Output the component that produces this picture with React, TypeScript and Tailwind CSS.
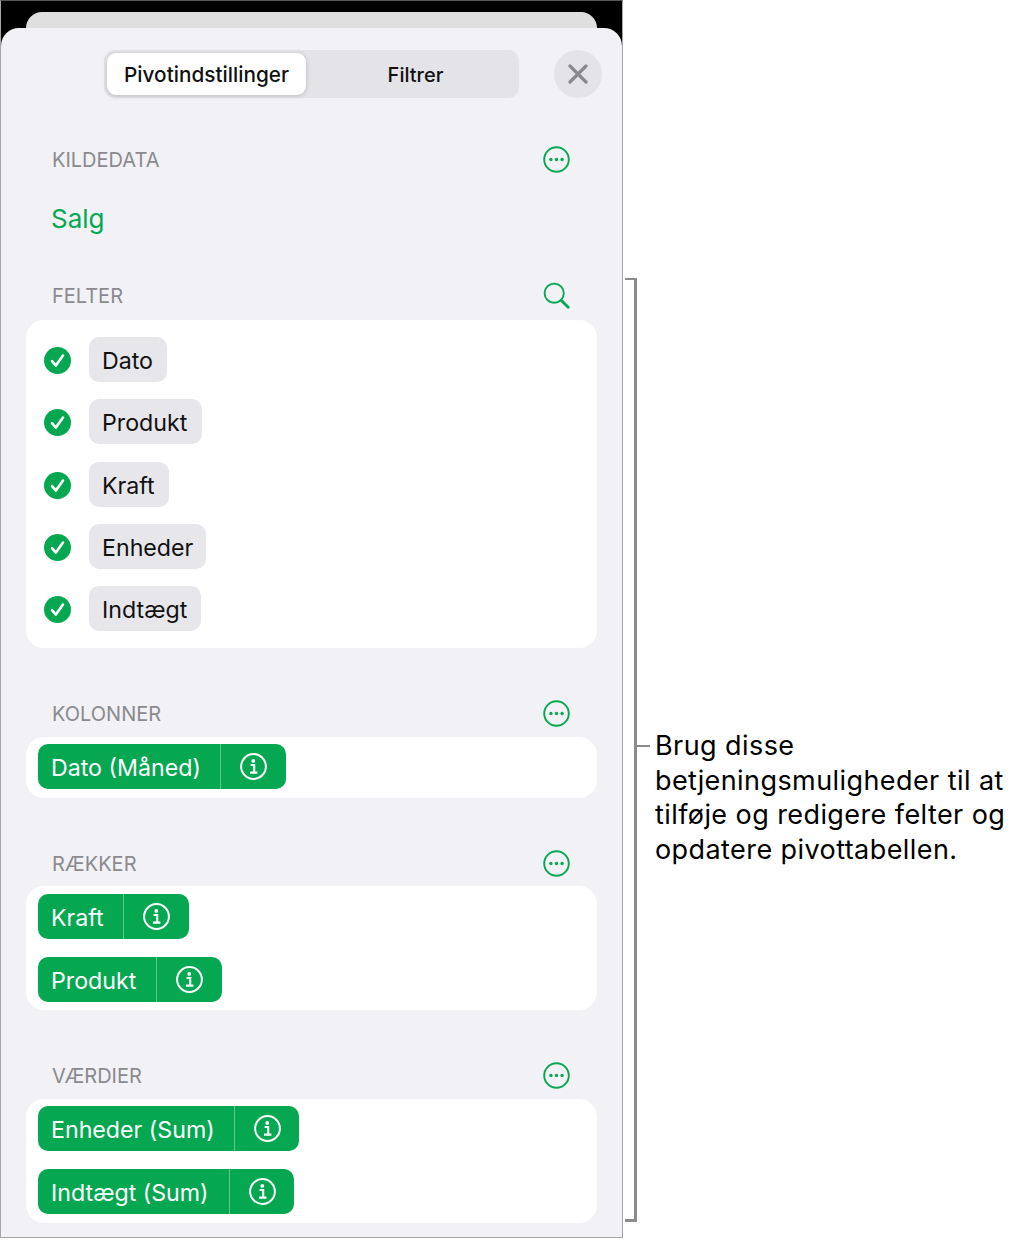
import React from "react";

const font = { fontFamily: "Inter, 'Liberation Sans', sans-serif" };

function MoreIcon() {
  return (
    <svg width="27" height="27" viewBox="0 0 27 27" fill="none">
      <circle cx="13.5" cy="13.5" r="12.3" stroke="#05a850" strokeWidth="1.9" />
      <circle cx="7.9" cy="13.5" r="1.7" fill="#05a850" />
      <circle cx="13.5" cy="13.5" r="1.7" fill="#05a850" />
      <circle cx="19.1" cy="13.5" r="1.7" fill="#05a850" />
    </svg>
  );
}

function SearchIcon() {
  return (
    <svg width="27" height="27" viewBox="0 0 27 27" fill="none">
      <circle cx="11.2" cy="11.2" r="9.6" stroke="#05a850" strokeWidth="1.9" />
      <path d="M18.2 18.2 L25.2 25.2" stroke="#05a850" strokeWidth="2.8" strokeLinecap="round" />
    </svg>
  );
}

function CheckIcon() {
  return (
    <svg width="27" height="27" viewBox="0 0 27 27" fill="none" className="shrink-0 mt-[2px]">
      <circle cx="13.5" cy="13.5" r="13.5" fill="#05a850" />
      <path d="M8 14.2 L11.9 18.6 L19 8.6" stroke="#fff" strokeWidth="2.6" strokeLinecap="round" strokeLinejoin="round" />
    </svg>
  );
}

function InfoIcon() {
  return (
    <svg width="27" height="27" viewBox="0 0 27 27" fill="none">
      <circle cx="13.5" cy="13.5" r="12.4" stroke="#fff" strokeWidth="2" />
      <circle cx="13.3" cy="7.9" r="1.9" fill="#fff" />
      <path d="M10.6 12 H14.2 V19.4 M10 19.6 H17.4" stroke="#fff" strokeWidth="2.1" />
    </svg>
  );
}

function SectionHeader({ title, icon, className }: { title: string; icon: React.ReactNode; className: string }) {
  return (
    <div className={`flex items-center justify-between pl-[51px] pr-[52.5px] h-[28px] ${className}`}>
      <span className="pt-[2px] text-[20px] text-[#8a8a8e]">{title}</span>
      {icon}
    </div>
  );
}

function FieldRow({ name, chipWidth }: { name: string; chipWidth: string }) {
  return (
    <div className="flex items-center gap-[18px] h-[45px]">
      <CheckIcon />
      <span className={`${chipWidth} h-[45px] flex items-center pl-[13px] pt-[4px] rounded-[10px] bg-[#e6e6eb] text-[23.2px] text-[#111]`}>
        {name}
      </span>
    </div>
  );
}

function GreenPill({ name, labelWidth, infoWidth }: { name: string; labelWidth: string; infoWidth: string }) {
  return (
    <div className="flex h-[45px] w-fit rounded-[10px] bg-[#05a850] text-white">
      <span className={`${labelWidth} flex items-center pl-[13px] pt-[4px] text-[23.2px] border-r border-[#5cc98f] whitespace-nowrap`}>
        {name}
      </span>
      <span className={`${infoWidth} flex items-center justify-center`}>
        <InfoIcon />
      </span>
    </div>
  );
}

export default function App() {
  return (
    <div className="w-[1013px] h-[1240px] bg-white flex overflow-hidden" style={font}>
      {/* Phone sheet */}
      <div className="w-[623px] h-[1238px] shrink-0 bg-black border-t border-t-[#555] border-x border-x-[#a5a5a8] border-b border-b-[#a5a5a8] flex flex-col">
        <div className="mx-[25px] mt-[11px] h-[16px] shrink-0 rounded-t-[16px] bg-[#dfdfdf]" />
        <div className="flex-1 rounded-t-[18px] bg-[#f1f1f6] flex flex-col">
          {/* Top bar */}
          <div className="flex mt-[22px] ml-[103px] h-[48px]">
            <div className="w-[415px] h-[48px] rounded-[11px] bg-[#e3e3e8] flex p-[3px]">
              <div className="w-[199px] h-[42px] rounded-[9px] bg-white shadow-[0_1px_5px_rgba(0,0,0,0.18)] flex items-center justify-center pt-[2px] text-[20.75px] font-medium text-[#111]">
                Pivotindstillinger
              </div>
              <div className="flex-1 flex items-center justify-center pl-[9px] pt-[1px] text-[20px] font-medium text-[#111]">Filtrer</div>
            </div>
            <div className="ml-[35px] w-[48px] h-[48px] rounded-full bg-[#e3e3e8] flex items-center justify-center">
              <svg width="20" height="20" viewBox="0 0 20 20" fill="none">
                <path d="M2 2 L18 18 M18 2 L2 18" stroke="#8a8a8e" strokeWidth="3.2" strokeLinecap="round" />
              </svg>
            </div>
          </div>

          <SectionHeader title="KILDEDATA" icon={<MoreIcon />} className="mt-[47px]" />
          <div className="mt-[29px] pl-[50px] h-[32px] flex items-center text-[26px] text-[#05a850]">Salg</div>

          <SectionHeader title="FELTER" icon={<SearchIcon />} className="mt-[47px]" />
          <div className="mt-[11px] mx-[25px] h-[328px] rounded-[18px] bg-white pl-[18px] pt-[17px] flex flex-col gap-[17.25px]">
            <FieldRow name="Dato" chipWidth="w-[78px]" />
            <FieldRow name="Produkt" chipWidth="w-[113px]" />
            <FieldRow name="Kraft" chipWidth="w-[80px]" />
            <FieldRow name="Enheder" chipWidth="w-[117px]" />
            <FieldRow name="Indtægt" chipWidth="w-[112px]" />
          </div>

          <SectionHeader title="KOLONNER" icon={<MoreIcon />} className="mt-[51px]" />
          <div className="mt-[10px] mx-[25px] h-[61px] rounded-[18px] bg-white pl-[12px] pt-[7px]">
            <GreenPill name="Dato (Måned)" labelWidth="w-[183px]" infoWidth="w-[65px]" />
          </div>

          <SectionHeader title="RÆKKER" icon={<MoreIcon />} className="mt-[51px]" />
          <div className="mt-[9px] mx-[25px] h-[124px] rounded-[18px] bg-white pl-[12px] pt-[8px] flex flex-col gap-[18px]">
            <GreenPill name="Kraft" labelWidth="w-[86px]" infoWidth="w-[65px]" />
            <GreenPill name="Produkt" labelWidth="w-[119px]" infoWidth="w-[65px]" />
          </div>

          <SectionHeader title="VÆRDIER" icon={<MoreIcon />} className="mt-[51px]" />
          <div className="mt-[10px] mx-[25px] h-[124px] rounded-[18px] bg-white pl-[12px] pt-[7px] flex flex-col gap-[18px]">
            <GreenPill name="Enheder (Sum)" labelWidth="w-[197px]" infoWidth="w-[64px]" />
            <GreenPill name="Indtægt (Sum)" labelWidth="w-[192px]" infoWidth="w-[64px]" />
          </div>
        </div>
      </div>

      {/* Callout */}
      <div className="flex items-start">
        <div className="mt-[278px] ml-[2px] w-[12px] h-[944px] border-t-2 border-r-[3px] border-b-[3px] border-[#8c8c8c]" />
        <div className="mt-[745px] w-[13px] h-[2px] bg-[#8c8c8c]" />
        <p className="mt-[729px] ml-[5px] w-[355px] text-[27px] tracking-[0.42px] leading-[34.6px] text-black">
          Brug disse betjeningsmuligheder til at tilføje og redigere felter og opdatere pivottabellen.
        </p>
      </div>
    </div>
  );
}
